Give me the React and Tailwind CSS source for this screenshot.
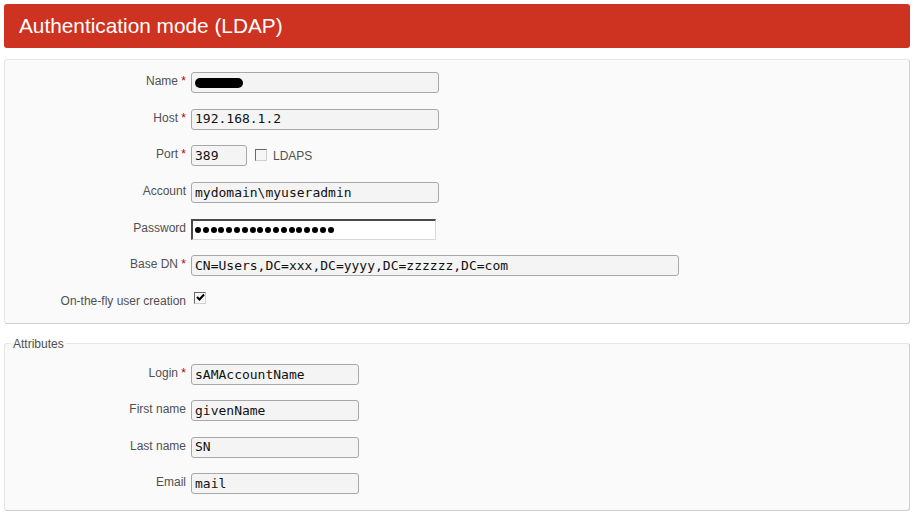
import React from 'react';

const Req = () => <span className="text-[#bb0000]"> *</span>;

const Row = ({ label, req, children }) => (
  <div className="flex items-start h-[21px]">
    <div className="w-[181px] shrink-0 text-right pt-[2px] text-[12px] leading-[14px] text-[#505050]">
      {label}
      {req && <Req />}
    </div>
    <div className="ml-[5px] flex items-start">{children}</div>
  </div>
);

const Field = ({ w, children }) => (
  <div
    className={`${w} h-[21px] bg-[#f4f4f4] border border-[#a8a8a8] rounded-[3px] pl-[3px] flex items-center text-[13px] text-[#111] whitespace-pre`}
    style={{ fontFamily: '"DejaVu Sans Mono", "Liberation Mono", monospace' }}
  >
    {children}
  </div>
);

const Checkbox = ({ checked }) => (
  <div className="w-[12px] h-[12px] bg-[#f6f6f6] border border-t-[#6a6a6a] border-l-[#6a6a6a] border-r-[#cfcfcf] border-b-[#cfcfcf] flex items-center justify-center">
    {checked && (
      <svg width="9" height="9" viewBox="0 0 9 9">
        <path d="M1 4 L3.5 6.5 L8 1.5" stroke="#000" strokeWidth="2" fill="none" />
      </svg>
    )}
  </div>
);

export default function App() {
  const dots = Array.from({ length: 18 });
  return (
    <div className="bg-white min-h-[513px] p-[4px] text-[#505050]" style={{ fontFamily: '"Liberation Sans", Arial, sans-serif' }}>
      <div className="h-[44px] bg-[#cd3320] rounded-[3px] flex items-center pl-[15px]">
        <h2 className="text-white text-[20.8px] font-normal leading-none">Authentication mode (LDAP)</h2>
      </div>

      <div className="mt-[11px] bg-[#fafafa] border border-[#e6e6e6] border-r-[#cfcfcf] border-b-[#cfcfcf] rounded-[3px] pt-[12px] pb-[10px] flex flex-col gap-[15.67px]">
        <Row label="Name" req>
          <Field w="w-[248px]">
            <span className="inline-block w-[48px] h-[10px] bg-black rounded-full" />
          </Field>
        </Row>
        <Row label="Host" req>
          <Field w="w-[248px]">192.168.1.2</Field>
        </Row>
        <Row label="Port" req>
          <Field w="w-[56px]">389</Field>
          <div className="ml-[8px] mt-[4px]">
            <Checkbox />
          </div>
          <span className="ml-[6px] mt-[4px] text-[12px] leading-[14px] text-[#505050]">LDAPS</span>
        </Row>
        <Row label="Account">
          <Field w="w-[248px]">mydomain\myuseradmin</Field>
        </Row>
        <Row label="Password">
          <div className="w-[245px] h-[21px] bg-white border-t-2 border-l-2 border-t-[#4a4a4a] border-l-[#4a4a4a] border-r border-b border-r-[#d8d8d8] border-b-[#d8d8d8] pl-[2px] flex items-center gap-[1.8px]">
            {dots.map((_, i) => (
              <span key={i} className="w-[6px] h-[6px] rounded-full bg-black" />
            ))}
          </div>
        </Row>
        <Row label="Base DN" req>
          <Field w="w-[488px]">CN=Users,DC=xxx,DC=yyyy,DC=zzzzzz,DC=com</Field>
        </Row>
        <Row label="On-the-fly user creation">
          <div className="ml-[3px]">
            <Checkbox checked />
          </div>
        </Row>
      </div>

      <fieldset className="mt-[13px] bg-[#fafafa] border border-[#e6e6e6] border-r-[#cfcfcf] border-b-[#cfcfcf] rounded-[3px] pt-[13px] pb-[16px] flex flex-col gap-[15.33px]">
        <legend className="ml-[6px] px-[2px] text-[12px] leading-[14px] text-[#505050]">Attributes</legend>
        <Row label="Login" req>
          <Field w="w-[168px]">sAMAccountName</Field>
        </Row>
        <Row label="First name">
          <Field w="w-[168px]">givenName</Field>
        </Row>
        <Row label="Last name">
          <Field w="w-[168px]">SN</Field>
        </Row>
        <Row label="Email">
          <Field w="w-[168px]">mail</Field>
        </Row>
      </fieldset>
    </div>
  );
}
